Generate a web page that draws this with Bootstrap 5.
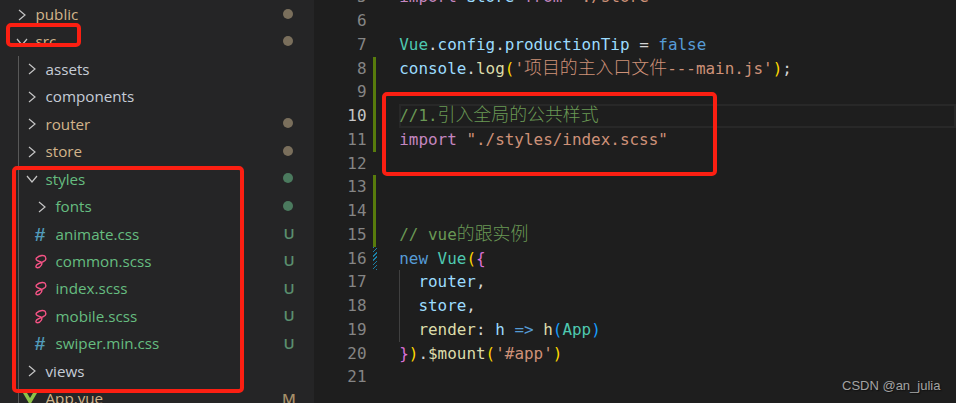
<!DOCTYPE html>
<html lang="zh-CN">
<head>
<meta charset="utf-8">
<title>main.js</title>
<link href="https://cdn.jsdelivr.net/npm/bootstrap@5.3.0/dist/css/bootstrap.min.css" rel="stylesheet">
<style>
html,body{height:403px;overflow:hidden;background:#1e1e1e}
.shell{width:956px;height:403px;overflow:hidden;position:relative}
.side{width:314px;height:403px;background:#252526;overflow:hidden;flex:none;padding-top:.8px;font-family:"Open Sans","Noto Sans",sans-serif;font-size:15.2px;color:#c5ccd6}
.row-t{height:27.45px;line-height:27px;padding-right:20px}
.row-t svg{flex:none}
.chev{width:14px;display:flex;justify-content:center}
.ind0{padding-left:15px}
.file-ic{width:14px;display:flex;justify-content:center;align-items:center;margin-left:-2px;margin-right:2px}
.tree-name{flex:1 1 auto;padding-left:6.500px}
.tan{color:#d2b48a}.grn{color:#66bd80}
.dot-b{width:10px;height:10px;border-radius:50%;background:#7a6f5c;margin-right:1px;margin-top:-2px}
.dot-g{background:#4b7a5e}
.gbadge{font-size:15px;width:14px;text-align:center;margin-right:-2px;margin-top:-1px;color:#5a8f6e;font-weight:600}
.mbadge{color:#a58f68}
.hash{color:#519aba;font-weight:700;font-size:19px;line-height:1;font-family:"Liberation Sans",sans-serif}
.guide-wrap{box-shadow:inset 1px 0 0 #585858;margin-left:18px}
.guide-wrap .ind1{padding-left:7px}
.guide-wrap .ind2{padding-left:17px}
.edit{flex:1 1 auto;margin-top:-14.7px;font-family:"DejaVu Sans Mono","Liberation Mono",monospace;font-size:15.95px;color:#d4d4d4;min-width:0}
.ln{height:23.75px;line-height:23.75px;white-space:pre}
.num{width:52.5px;text-align:right;color:#858585;flex:none}
.num-on{color:#c6c6c6}
.mk{width:3px;margin-left:6.5px;margin-right:23.2px;flex:none}
.mk-add{background:#587c0c}
.mk-mod{width:4px;margin-right:22.2px;background:repeating-linear-gradient(-45deg,#1b81a8 0,#1b81a8 1px,#1e1e1e 1px,#1e1e1e 3px)}
.code{flex:1 1 auto}
.code-on{box-shadow:inset 0 0 0 2px #282828}
.tab{display:inline-block;width:19.2px;box-shadow:inset 1px 0 0 #404040;height:23.75px;vertical-align:top}
.cjk{font-family:"Noto Sans CJK SC",sans-serif;font-size:17.9px;line-height:1;font-weight:300}
.k{color:#c586c0}.v{color:#9cdcfe}.s{color:#ce9178}.t{color:#4ec9b0}.b{color:#569cd6}.f{color:#dcdcaa}.c{color:#6a9955}.p1{color:#ffd700}.p2{color:#da70d6}.p3{color:#179fff}
.red-a{position:absolute;border:4px solid #fb1f12;border-radius:5px;pointer-events:none}
.ra1{left:6px;top:23px;width:75px;height:24px}
.ra2{left:12px;top:166px;width:232px;height:227px}
.ra3{left:382px;top:92px;width:335px;height:84px}
.wmk{position:absolute;left:842px;top:377px;font-family:"Liberation Sans",sans-serif;font-size:13px;line-height:18px;color:#a3a3a3;text-shadow:1px 1px 1px #111}
</style>
</head>
<body>
<div class="shell d-flex">
  <aside class="side">
    <div class="row-t d-flex align-items-center ind0"><span class="chev"><svg width="10" height="14" viewBox="0 0 10 14"><path d="M2 2l6 5-6 5" fill="none" stroke="#c5c5c5" stroke-width="1.2"/></svg></span><span class="tree-name tan">public</span><span class="dot-b"></span></div>
    <div class="row-t d-flex align-items-center ind0"><span class="chev"><svg width="14" height="10" viewBox="0 0 14 10"><path d="M2 2l5 6 5-6" fill="none" stroke="#c5c5c5" stroke-width="1.2"/></svg></span><span class="tree-name tan">src</span><span class="dot-b"></span></div>
    <div class="guide-wrap">
      <div class="row-t d-flex align-items-center ind1"><span class="chev"><svg width="10" height="14" viewBox="0 0 10 14"><path d="M2 2l6 5-6 5" fill="none" stroke="#c5c5c5" stroke-width="1.2"/></svg></span><span class="tree-name">assets</span></div>
      <div class="row-t d-flex align-items-center ind1"><span class="chev"><svg width="10" height="14" viewBox="0 0 10 14"><path d="M2 2l6 5-6 5" fill="none" stroke="#c5c5c5" stroke-width="1.2"/></svg></span><span class="tree-name">components</span></div>
      <div class="row-t d-flex align-items-center ind1"><span class="chev"><svg width="10" height="14" viewBox="0 0 10 14"><path d="M2 2l6 5-6 5" fill="none" stroke="#c5c5c5" stroke-width="1.2"/></svg></span><span class="tree-name tan">router</span><span class="dot-b"></span></div>
      <div class="row-t d-flex align-items-center ind1"><span class="chev"><svg width="10" height="14" viewBox="0 0 10 14"><path d="M2 2l6 5-6 5" fill="none" stroke="#c5c5c5" stroke-width="1.2"/></svg></span><span class="tree-name tan">store</span><span class="dot-b"></span></div>
      <div class="row-t d-flex align-items-center ind1"><span class="chev"><svg width="14" height="10" viewBox="0 0 14 10"><path d="M2 2l5 6 5-6" fill="none" stroke="#c5c5c5" stroke-width="1.2"/></svg></span><span class="tree-name grn">styles</span><span class="dot-b dot-g"></span></div>
      <div class="row-t d-flex align-items-center ind2"><span class="chev"><svg width="10" height="14" viewBox="0 0 10 14"><path d="M2 2l6 5-6 5" fill="none" stroke="#c5c5c5" stroke-width="1.2"/></svg></span><span class="tree-name grn">fonts</span><span class="dot-b dot-g"></span></div>
      <div class="row-t d-flex align-items-center ind2"><span class="file-ic"><span class="hash">#</span></span><span class="tree-name grn">animate.css</span><span class="gbadge">U</span></div>
      <div class="row-t d-flex align-items-center ind2"><span class="file-ic"><svg width="14" height="15" viewBox="0 0 14 15"><path d="M12.5 3.500C12.500 .6 6.500 .8 3.500 4C2 6 5 7 8 8C10 9.200 8 13.500 4.500 13.800C2.200 13.800 2.500 11 5 10C7 9 9.500 8.500 12 6.500C13 5.500 13 4.500 12.500 3.500" fill="none" stroke="#f55385" stroke-width="1.4"/></svg></span><span class="tree-name grn">common.scss</span><span class="gbadge">U</span></div>
      <div class="row-t d-flex align-items-center ind2"><span class="file-ic"><svg width="14" height="15" viewBox="0 0 14 15"><path d="M12.5 3.500C12.500 .6 6.500 .8 3.500 4C2 6 5 7 8 8C10 9.200 8 13.500 4.500 13.800C2.200 13.800 2.500 11 5 10C7 9 9.500 8.500 12 6.500C13 5.500 13 4.500 12.500 3.500" fill="none" stroke="#f55385" stroke-width="1.4"/></svg></span><span class="tree-name grn">index.scss</span><span class="gbadge">U</span></div>
      <div class="row-t d-flex align-items-center ind2"><span class="file-ic"><svg width="14" height="15" viewBox="0 0 14 15"><path d="M12.5 3.500C12.500 .6 6.500 .8 3.500 4C2 6 5 7 8 8C10 9.200 8 13.500 4.500 13.800C2.200 13.800 2.500 11 5 10C7 9 9.500 8.500 12 6.500C13 5.500 13 4.500 12.500 3.500" fill="none" stroke="#f55385" stroke-width="1.4"/></svg></span><span class="tree-name grn">mobile.scss</span><span class="gbadge">U</span></div>
      <div class="row-t d-flex align-items-center ind2"><span class="file-ic"><span class="hash">#</span></span><span class="tree-name grn">swiper.min.css</span><span class="gbadge">U</span></div>
      <div class="row-t d-flex align-items-center ind1"><span class="chev"><svg width="10" height="14" viewBox="0 0 10 14"><path d="M2 2l6 5-6 5" fill="none" stroke="#c5c5c5" stroke-width="1.2"/></svg></span><span class="tree-name">views</span></div>
      <div class="row-t d-flex align-items-center ind1"><span class="file-ic"><svg width="14" height="13" viewBox="0 0 14 13"><path d="M0 1h14L7 13z" fill="#8dc149"/><path d="M4 1h6L7 6z" fill="#252526"/></svg></span><span class="tree-name tan">App.vue</span><span class="gbadge mbadge">M</span></div>
    </div>
  </aside>
  <main class="edit">
    <div class="ln d-flex"><span class="num">5</span><span class="mk"></span><span class="code"><span class="k">import</span> <span class="v">Store</span> <span class="k">from</span> <span class="s">'./store'</span></span></div>
    <div class="ln d-flex"><span class="num">6</span><span class="mk"></span><span class="code"></span></div>
    <div class="ln d-flex"><span class="num">7</span><span class="mk"></span><span class="code"><span class="t">Vue</span>.<span class="v">config</span>.<span class="v">productionTip</span> = <span class="b">false</span></span></div>
    <div class="ln d-flex"><span class="num">8</span><span class="mk mk-add"></span><span class="code"><span class="v">console</span>.<span class="f">log</span><span class="p1">(</span><span class="s">'<span class="cjk">项目的主入口文件</span>---main.js'</span><span class="p1">)</span>;</span></div>
    <div class="ln d-flex"><span class="num">9</span><span class="mk mk-add"></span><span class="code"></span></div>
    <div class="ln d-flex"><span class="num num-on">10</span><span class="mk mk-add"></span><span class="code code-on"><span class="c">//1.<span class="cjk">引入全局的公共样式</span></span></span></div>
    <div class="ln d-flex"><span class="num">11</span><span class="mk mk-add"></span><span class="code"><span class="k">import</span> <span class="s">"./styles/index.scss"</span></span></div>
    <div class="ln d-flex"><span class="num">12</span><span class="mk"></span><span class="code"></span></div>
    <div class="ln d-flex"><span class="num">13</span><span class="mk mk-add"></span><span class="code"></span></div>
    <div class="ln d-flex"><span class="num">14</span><span class="mk mk-add"></span><span class="code"></span></div>
    <div class="ln d-flex"><span class="num">15</span><span class="mk mk-add"></span><span class="code"><span class="c">// vue<span class="cjk">的跟实例</span></span></span></div>
    <div class="ln d-flex"><span class="num">16</span><span class="mk mk-mod"></span><span class="code"><span class="b">new</span> <span class="t">Vue</span><span class="p1">(</span><span class="p2">{</span></span></div>
    <div class="ln d-flex"><span class="num">17</span><span class="mk"></span><span class="code"><span class="tab"></span><span class="v">router</span>,</span></div>
    <div class="ln d-flex"><span class="num">18</span><span class="mk"></span><span class="code"><span class="tab"></span><span class="v">store</span>,</span></div>
    <div class="ln d-flex"><span class="num">19</span><span class="mk"></span><span class="code"><span class="tab"></span><span class="f">render</span>: <span class="v">h</span> <span class="b">=&gt;</span> <span class="f">h</span><span class="p3">(</span><span class="t">App</span><span class="p3">)</span></span></div>
    <div class="ln d-flex"><span class="num">20</span><span class="mk"></span><span class="code"><span class="p2">}</span><span class="p1">)</span>.<span class="f">$mount</span><span class="p1">(</span><span class="s">'#app'</span><span class="p1">)</span></span></div>
    <div class="ln d-flex"><span class="num">21</span><span class="mk"></span><span class="code"></span></div>
  </main>
  <div class="red-a ra1"></div>
  <div class="red-a ra2"></div>
  <div class="red-a ra3"></div>
  <div class="wmk">CSDN @an_julia</div>
</div>
<script src="https://cdn.jsdelivr.net/npm/bootstrap@5.3.0/dist/js/bootstrap.bundle.min.js"></script>
</body>
</html>
